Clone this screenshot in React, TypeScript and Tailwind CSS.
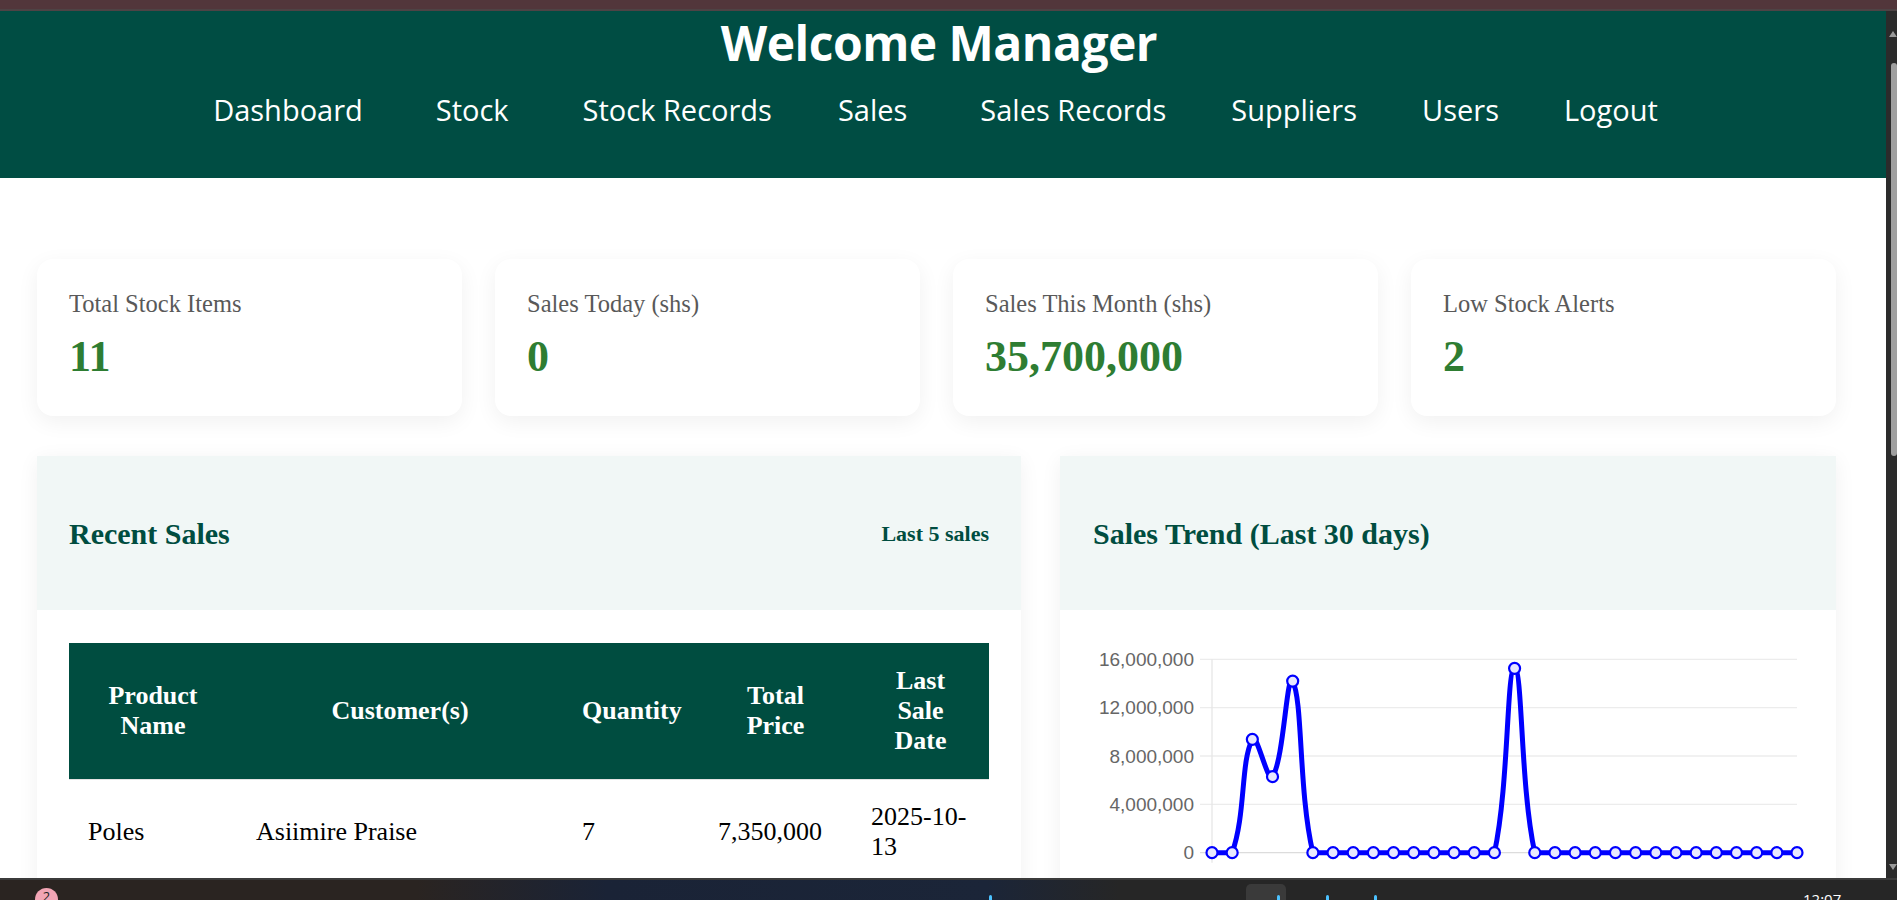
import React from "react";

const SERIF = { fontFamily: "'Liberation Serif', 'Times New Roman', serif" };
const SANS = { fontFamily: "'Open Sans', 'Noto Sans', sans-serif" };

const navItems = [
  { t: "Dashboard", m: "ml-0" },
  { t: "Stock", m: "ml-[73px]" },
  { t: "Stock Records", m: "ml-[74px]" },
  { t: "Sales", m: "ml-[66px]" },
  { t: "Sales Records", m: "ml-[73px]" },
  { t: "Suppliers", m: "ml-[65px]" },
  { t: "Users", m: "ml-[65px]" },
  { t: "Logout", m: "ml-[65px]" },
];

const cards = [
  { label: "Total Stock Items", value: "11" },
  { label: "Sales Today (shs)", value: "0" },
  { label: "Sales This Month (shs)", value: "35,700,000" },
  { label: "Low Stock Alerts", value: "2" },
];

const values: number[] = Array.from({ length: 30 }, () => 0);
values[2] = 9.38e6;
values[3] = 6.29e6;
values[4] = 14.2e6;
values[15] = 15.25e6;

const LEFT = 152;
const RIGHT = 737;
const TOP = 49.3;
const BOTTOM = 242.7;
const MAXV = 16e6;

type P = { x: number; y: number };

function buildPath(pts: P[]) {
  const t = 0.4;
  const cps = pts.map((cur, i) => {
    const prev = i === 0 ? cur : pts[i - 1];
    const next = i === pts.length - 1 ? cur : pts[i + 1];
    const d01 = Math.hypot(cur.x - prev.x, cur.y - prev.y);
    const d12 = Math.hypot(next.x - cur.x, next.y - cur.y);
    let s01 = d01 / (d01 + d12);
    let s12 = d12 / (d01 + d12);
    if (isNaN(s01)) s01 = 0;
    if (isNaN(s12)) s12 = 0;
    const fa = t * s01;
    const fb = t * s12;
    const clampY = (y: number) => Math.min(BOTTOM, Math.max(TOP, y));
    const clampX = (x: number) => Math.min(RIGHT, Math.max(LEFT, x));
    return {
      prev: { x: clampX(cur.x - fa * (next.x - prev.x)), y: clampY(cur.y - fa * (next.y - prev.y)) },
      next: { x: clampX(cur.x + fb * (next.x - prev.x)), y: clampY(cur.y + fb * (next.y - prev.y)) },
    };
  });
  let d = `M ${pts[0].x} ${pts[0].y}`;
  for (let i = 1; i < pts.length; i++) {
    const a = cps[i - 1].next;
    const b = cps[i].prev;
    d += ` C ${a.x} ${a.y} ${b.x} ${b.y} ${pts[i].x} ${pts[i].y}`;
  }
  return d;
}

function Chart() {
  const step = (RIGHT - LEFT) / 29;
  const pts = values.map((v, i) => ({ x: LEFT + i * step, y: BOTTOM - (v / MAXV) * (BOTTOM - TOP) }));
  const ticks = [16e6, 12e6, 8e6, 4e6, 0];
  const start = new Date(2025, 8, 15);
  return (
    <svg width={776} height={300} className="block">
      {ticks.map((tv, k) => {
        const y = TOP + k * ((BOTTOM - TOP) / 4);
        return (
          <g key={tv}>
            <line x1={140} x2={RIGHT} y1={y} y2={y} stroke={tv === 0 ? "#dcdcdc" : "#ececec"} strokeWidth={1.3} />
            <text x={134} y={y} textAnchor="end" dominantBaseline="central" fill="#666" fontSize={19} fontFamily="'Liberation Sans', Arial, sans-serif">
              {tv.toLocaleString("en-US")}
            </text>
          </g>
        );
      })}
      <line x1={LEFT} x2={LEFT} y1={TOP} y2={BOTTOM + 10} stroke="#e6e6e6" strokeWidth={1.3} />
      {pts.map((p, i) => {
        if (i % 2 !== 0) return null;
        const d = new Date(start.getTime() + i * 86400000);
        const s = `${d.getFullYear()}-${String(d.getMonth() + 1).padStart(2, "0")}-${String(d.getDate()).padStart(2, "0")}`;
        return (
          <text key={i} x={p.x - 4} y={281} textAnchor="end" fill="#666" fontSize={19} fontFamily="'Liberation Sans', Arial, sans-serif" transform={`rotate(-50 ${p.x - 4} 281)`}>
            {s}
          </text>
        );
      })}
      <path d={buildPath(pts)} fill="none" stroke="#0000ff" strokeWidth={5} strokeLinejoin="round" strokeLinecap="round" />
      {pts.map((p, i) => (
        <circle key={i} cx={p.x} cy={p.y} r={5.5} fill="#e8e8ff" stroke="#0000ff" strokeWidth={2.2} />
      ))}
    </svg>
  );
}

export default function App() {
  return (
    <div className="h-[900px] w-full flex flex-col overflow-hidden bg-white">
      <div className="h-[9px] bg-[#52363b] shrink-0" />
      <div className="h-[2px] bg-[#4e4345] shrink-0" />
      <div className="flex-1 flex min-h-0">
        <main className="flex-1 min-w-0 overflow-hidden bg-white">
          <header className="bg-[#004d43] h-[167px] flex flex-col items-center pt-[8px]" style={SANS}>
            <h1 className="mr-[8px] text-white font-bold text-[48px] leading-[48px] tracking-[-0.5px]">Welcome Manager</h1>
            <nav className="mt-[28px] mr-[15px] flex justify-center text-white text-[29px] leading-[29px]">
              {navItems.map((n) => (
                <a key={n.t} className={`whitespace-nowrap ${n.m}`}>{n.t}</a>
              ))}
            </nav>
          </header>

          <div className="pl-[37px] pr-[50px] pt-[81px]" style={SERIF}>
            <div className="grid grid-cols-4 gap-[33px]">
              {cards.map((c) => (
                <div key={c.label} className="h-[157px] rounded-[16px] bg-white shadow-[0_6px_22px_rgba(0,0,0,0.06)] px-[32px] pt-[31px]">
                  <div className="text-[24.5px] leading-[28px] text-[#595959]">{c.label}</div>
                  <div className="mt-[14px] text-[44px] leading-[50px] font-bold text-[#2e7d32]">{c.value}</div>
                </div>
              ))}
            </div>

            <div className="mt-[40px] flex gap-[39px]">
              <section className="w-[984px] shrink-0 bg-white shadow-[0_4px_20px_rgba(0,0,0,0.06)]">
                <div className="h-[154px] bg-[#f1f7f6] flex items-center justify-between px-[32px]">
                  <h2 className="text-[30px] font-bold text-[#004d40]">Recent Sales</h2>
                  <span className="text-[22px] font-bold text-[#004d40]">Last 5 sales</span>
                </div>
                <div className="pt-[33px] px-[32px]">
                  <table className="table-fixed w-[920px] border-collapse text-[26px] leading-[30px]">
                    <colgroup>
                      <col className="w-[168px]" />
                      <col className="w-[326px]" />
                      <col className="w-[136px]" />
                      <col className="w-[153px]" />
                      <col className="w-[137px]" />
                    </colgroup>
                    <thead>
                      <tr className="bg-[#004d40] text-white">
                        {["Product Name", "Customer(s)", "Quantity", "Total Price", "Last Sale Date"].map((h) => (
                          <th key={h} className="h-[135px] px-[19px] py-[23px] font-bold text-center border-b border-[#e3e3e3]">
                            {h}
                          </th>
                        ))}
                      </tr>
                    </thead>
                    <tbody>
                      <tr className="text-black">
                        <td className="px-[19px] py-[22px]">Poles</td>
                        <td className="px-[19px] py-[22px]">Asiimire Praise</td>
                        <td className="px-[19px] py-[22px]">7</td>
                        <td className="px-[19px] py-[22px]">7,350,000</td>
                        <td className="px-[19px] py-[22px]">2025-10-13</td>
                      </tr>
                    </tbody>
                  </table>
                </div>
              </section>

              <section className="flex-1 min-w-0 bg-white shadow-[0_4px_20px_rgba(0,0,0,0.06)]">
                <div className="h-[154px] bg-[#f1f7f6] flex items-center px-[33px]">
                  <h2 className="text-[30px] font-bold text-[#004d40]">Sales Trend (Last 30 days)</h2>
                </div>
                <div>
                  <Chart />
                </div>
              </section>
            </div>
          </div>
        </main>

        <div className="w-[11px] shrink-0 bg-[#2b2b2b] flex flex-col items-end">
          <div className="mt-[20px] w-0 h-0 border-l-[4px] border-r-[4px] border-b-[6px] border-l-transparent border-r-transparent border-b-[#9a9a9a]" />
          <div className="mt-[26px] w-[6px] h-[393px] rounded-[3px] bg-[#9f9f9f]" />
          <div className="flex-1" />
          <div className="mb-[8px] w-0 h-0 border-l-[4px] border-r-[4px] border-t-[6px] border-l-transparent border-r-transparent border-t-[#9a9a9a]" />
        </div>
      </div>

      <div className="h-[22px] shrink-0 border-t-2 border-[#3b3b3b] flex items-start overflow-hidden bg-[linear-gradient(to_right,#2a2421_0%,#2a2421_22%,#1a2336_32%,#1b2538_52%,#262626_59%,#262626_100%)]" style={SANS}>
        <div className="ml-[35px] mt-[8px] w-[23px] h-[23px] shrink-0 rounded-full bg-[#f2a5b5] flex justify-center text-[13px] leading-[16px] text-[#222]">2</div>
        <div className="ml-[931px] mt-[15px] w-[3px] h-[8px] shrink-0 rounded-full bg-[#4cc2ff]" />
        <div className="ml-[254px] mt-[4px] w-[40px] h-[30px] shrink-0 rounded-[5px] bg-[#3a3a3a] flex">
          <div className="ml-[31px] mt-[11px] w-[3px] h-[8px] rounded-full bg-[#4cc2ff]" />
        </div>
        <div className="ml-[40px] mt-[15px] w-[3px] h-[8px] shrink-0 rounded-full bg-[#4cc2ff]" />
        <div className="ml-[45px] mt-[15px] w-[3px] h-[8px] shrink-0 rounded-full bg-[#4cc2ff]" />
        <div className="ml-[426px] mt-[12px] text-[15px] leading-[15px] text-white whitespace-nowrap">12:07</div>
      </div>
    </div>
  );
}
